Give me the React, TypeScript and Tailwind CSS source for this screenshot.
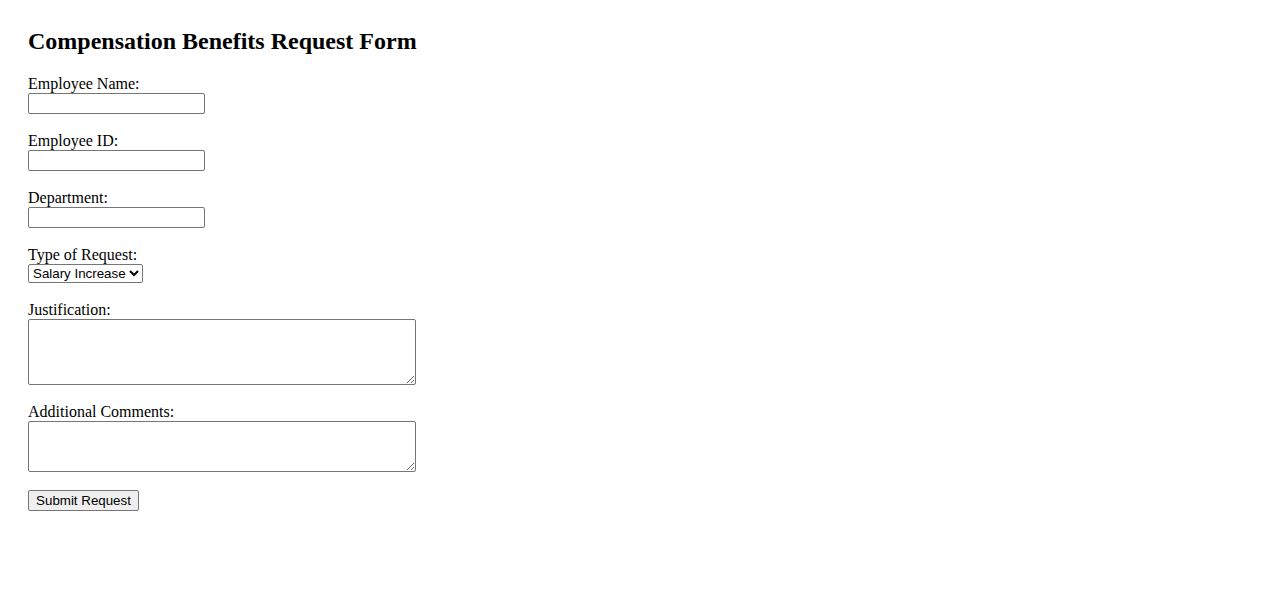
import React from 'react';

const fields = [
  { id: 'name', label: 'Employee Name:' },
  { id: 'eid', label: 'Employee ID:' },
  { id: 'dept', label: 'Department:' },
];

const controlFont = "font-['Liberation_Sans',Arial,sans-serif] text-[13.333px] text-black";

const App: React.FC = () => {
  return (
    <div className="min-h-screen bg-white px-[28px] pt-[28px] font-['Liberation_Serif','Times_New_Roman',serif] text-[16px] text-black">
      <h2 className="mb-[20px] text-[24px] font-bold leading-[27px]">Compensation Benefits Request Form</h2>
      <form onSubmit={(e) => e.preventDefault()} className="flex flex-col">
        {fields.map((f) => (
          <div key={f.id} className="mb-[18px] flex flex-col items-start">
            <label htmlFor={f.id} className="leading-[18px]">{f.label}</label>
            <input
              id={f.id}
              type="text"
              className={`${controlFont} h-[21px] w-[177px] rounded-[2px] border border-[#767676] bg-white px-[2px] outline-none`}
            />
          </div>
        ))}

        <div className="mb-[18px] flex flex-col items-start">
          <label htmlFor="type" className="leading-[18px]">Type of Request:</label>
          <select
            id="type"
            defaultValue="salary"
            className={`${controlFont} h-[19px] w-[115px] rounded-[2px] border border-[#767676] bg-white`}
          >
            <option value="salary">Salary Increase</option>
            <option value="bonus">Bonus</option>
            <option value="benefits">Benefits</option>
          </select>
        </div>

        <div className="mb-[18px] flex flex-col items-start">
          <label htmlFor="just" className="leading-[18px]">Justification:</label>
          <textarea
            id="just"
            className={`${controlFont} h-[66px] w-[388px] rounded-[2px] border border-[#767676] bg-white p-[2px] outline-none`}
          />
        </div>

        <div className="mb-[18px] flex flex-col items-start">
          <label htmlFor="comments" className="leading-[18px]">Additional Comments:</label>
          <textarea
            id="comments"
            className={`${controlFont} h-[51px] w-[388px] rounded-[2px] border border-[#767676] bg-white p-[2px] outline-none`}
          />
        </div>

        <div className="flex items-start">
          <button
            type="submit"
            className={`${controlFont} h-[21px] w-[111px] rounded-[2px] border border-[#767676] bg-[#efefef] px-[6px] text-center leading-[15px]`}
          >
            Submit Request
          </button>
        </div>
      </form>
    </div>
  );
};

export default App;
